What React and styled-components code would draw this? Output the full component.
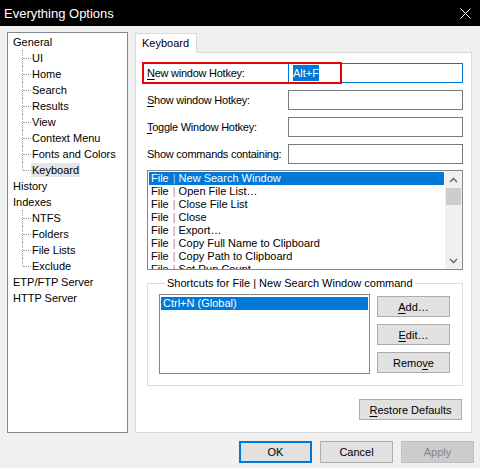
import React from 'react'
import styled, { createGlobalStyle } from 'styled-components'

const GlobalStyle = createGlobalStyle`
  html, body { margin: 0; padding: 0; }
  body {
    background: #f0f0f0;
    font-family: "Liberation Sans", Arial, sans-serif;
    font-size: 11px;
    color: #000;
  }
  * { box-sizing: border-box; }
`

const Window = styled.div`
  width: 480px;
  height: 468px;
  display: flex;
  flex-direction: column;
  background: #f0f0f0;
  overflow: hidden;
`

const TitleBar = styled.div`
  height: 26px;
  flex: none;
  background: #000;
  color: #fff;
  display: flex;
  align-items: center;
  justify-content: space-between;
  padding-left: 4px;
  font-size: 13px;
`

const CloseBox = styled.div`
  width: 30px;
  height: 26px;
  display: flex;
  align-items: center;
  justify-content: center;
`

const Body = styled.div`
  flex: 1;
  display: flex;
  flex-direction: column;
  gap: 8px;
  padding: 6px 6px 5px 7px;
`

const Main = styled.div`
  height: 401px;
  display: flex;
  gap: 7px;
`

const Tree = styled.div`
  width: 121px;
  border: 1px solid #828790;
  background: #fff;
  padding: 1px 0 0 5px;
`

const TreeRow = styled.div`
  position: relative;
  height: 16px;
  line-height: 16px;
  padding-left: ${p => (p.$child ? 19 : 0)}px;
  white-space: nowrap;

  ${p => p.$child && `
    &::before {
      content: "";
      position: absolute;
      left: 9px;
      top: 0;
      height: ${p.$last ? 8 : 16}px;
      border-left: 1px dotted #a0a0a0;
    }
    &::after {
      content: "";
      position: absolute;
      left: 10px;
      top: 8px;
      width: 8px;
      border-top: 1px dotted #a0a0a0;
    }
  `}
`

const TreeLabel = styled.span`
  display: inline-block;
  line-height: 14px;
  padding: 0 1px;
  margin-left: -1px;
  background: ${p => (p.$selected ? '#e5e5e5' : 'transparent')};
`

const Side = styled.div`
  width: 337px;
  display: flex;
  flex-direction: column;
`

const TabStrip = styled.div`
  display: flex;
  padding-top: 1px;
`

const Tab = styled.div`
  position: relative;
  z-index: 1;
  height: 20px;
  margin-bottom: -1px;
  padding: 2px 7px 0 6px;
  line-height: 15px;
  background: #fff;
  border: 1px solid #d9d9d9;
  border-bottom: none;
`

const Panel = styled.div`
  flex: 1;
  display: flex;
  flex-direction: column;
  background: #fff;
  border: 1px solid #d9d9d9;
  padding: 10px 8px 0 11px;
`

const FieldRow = styled.div`
  position: relative;
  display: grid;
  grid-template-columns: 141px 175px;
  align-items: center;
  height: 20px;
  margin-bottom: 7px;
`

const FieldLabel = styled.span`
  letter-spacing: -0.25px;
  white-space: nowrap;
`

const Marker = styled.div`
  position: absolute;
  left: -5px;
  top: -1px;
  width: 200px;
  height: 22px;
  border: 2px solid #e8000b;
  pointer-events: none;
`

const TextBox = styled.div`
  height: 20px;
  border: 1px solid ${p => (p.$focused ? '#0078d7' : '#7a7a7a')};
  background: #fff;
  padding: 1px 3px 1px 4px;
  display: flex;
  align-items: center;
`

const Selected = styled.span`
  background: #0078d7;
  color: #fff;
  line-height: 16px;
`

const Key = styled.u`
  text-decoration: underline;
  text-underline-offset: 2px;
`

const ListBox = styled.div`
  margin-top: -1px;
  height: 100px;
  border: 1px solid #828790;
  background: #fff;
  display: flex;
  overflow: hidden;
`

const ListRows = styled.div`
  flex: 1;
  padding: 1px;
  overflow: hidden;
`

const ListRow = styled.div`
  height: 13px;
  line-height: 13px;
  padding-left: 2px;
  white-space: nowrap;
  background: ${p => (p.$selected ? '#0078d7' : 'transparent')};
  color: ${p => (p.$selected ? '#fff' : '#000')};
`

const Pipe = styled.span`
  color: ${p => (p.$selected ? '#a9d2f3' : '#d0893e')};
  margin: 0 3px 0 4px;
`

const ScrollBar = styled.div`
  width: 17px;
  background: #f0f0f0;
  display: flex;
  flex-direction: column;
`

const ScrollArrow = styled.div`
  height: 17px;
  display: flex;
  align-items: center;
  justify-content: center;
`

const ScrollTrack = styled.div`
  flex: 1;
  padding: 0 1px;
`

const Thumb = styled.div`
  height: 17px;
  background: #cdcdcd;
`

const Group = styled.fieldset`
  margin: 6px 0 0;
  min-width: 0;
  border: 1px solid #dcdcdc;
  padding: 4px 12px 11px 11px;
  display: flex;
  gap: 7px;
`

const Legend = styled.legend`
  margin-left: 6px;
  padding: 0 2px;
  line-height: 14px;
`

const ShortcutList = styled.div`
  width: 211px;
  height: 80px;
  border: 1px solid #828790;
  background: #fff;
  padding: 2px 1px 1px;
`

const SideButtons = styled.div`
  display: flex;
  flex-direction: column;
  gap: 7px;
  padding-top: 2px;
`

const Button = styled.button`
  width: ${p => p.$width || 73}px;
  height: ${p => p.$height || 21}px;
  padding: 0;
  font: inherit;
  color: ${p => (p.$disabled ? '#838383' : '#000')};
  background: ${p => (p.$disabled ? '#cccccc' : '#e1e1e1')};
  border: ${p => (p.$default ? '2px solid #0078d7' : `1px solid ${p.$disabled ? '#bfbfbf' : '#adadad'}`)};
  border-radius: 0;
`

const RestoreRow = styled.div`
  display: flex;
  justify-content: flex-end;
  padding-right: 1px;
  margin-top: 13px;
`

const Footer = styled.div`
  display: flex;
  justify-content: flex-end;
  gap: 8px;
`

const tree = [
  { label: 'General' },
  { label: 'UI', child: true },
  { label: 'Home', child: true },
  { label: 'Search', child: true },
  { label: 'Results', child: true },
  { label: 'View', child: true },
  { label: 'Context Menu', child: true },
  { label: 'Fonts and Colors', child: true },
  { label: 'Keyboard', child: true, last: true, selected: true },
  { label: 'History' },
  { label: 'Indexes' },
  { label: 'NTFS', child: true },
  { label: 'Folders', child: true },
  { label: 'File Lists', child: true },
  { label: 'Exclude', child: true, last: true },
  { label: 'ETP/FTP Server' },
  { label: 'HTTP Server' },
]

const commands = [
  'New Search Window',
  'Open File List…',
  'Close File List',
  'Close',
  'Export…',
  'Copy Full Name to Clipboard',
  'Copy Path to Clipboard',
  'Set Run Count…',
]

const Chevron = ({ up }) => (
  <svg width="9" height="6" viewBox="0 0 9 6">
    <path d={up ? 'M1 5 L4.5 1.5 L8 5' : 'M1 1 L4.5 4.5 L8 1'} fill="none" stroke="#606060" strokeWidth="1.3" />
  </svg>
)

export default function App() {
  return (
    <Window>
      <GlobalStyle />
      <TitleBar>
        Everything Options
        <CloseBox>
          <svg width="11" height="11" viewBox="0 0 11 11">
            <path d="M0.5 0.5 L10.5 10.5 M10.5 0.5 L0.5 10.5" stroke="#fff" strokeWidth="1" />
          </svg>
        </CloseBox>
      </TitleBar>
      <Body>
        <Main>
          <Tree>
            {tree.map(item => (
              <TreeRow key={item.label} $child={item.child} $last={item.last}>
                <TreeLabel $selected={item.selected}>{item.label}</TreeLabel>
              </TreeRow>
            ))}
          </Tree>
          <Side>
            <TabStrip>
              <Tab>Keyboard</Tab>
            </TabStrip>
            <Panel>
              <FieldRow>
                <FieldLabel><Key>N</Key>ew window Hotkey:</FieldLabel>
                <TextBox $focused><Selected>Alt+F</Selected></TextBox>
                <Marker />
              </FieldRow>
              <FieldRow>
                <FieldLabel><Key>S</Key>how window Hotkey:</FieldLabel>
                <TextBox />
              </FieldRow>
              <FieldRow>
                <FieldLabel><Key>T</Key>oggle Window Hotkey:</FieldLabel>
                <TextBox />
              </FieldRow>
              <FieldRow>
                <FieldLabel>Show commands containing:</FieldLabel>
                <TextBox />
              </FieldRow>
              <ListBox>
                <ListRows>
                  {commands.map((cmd, i) => (
                    <ListRow key={cmd} $selected={i === 0}>
                      File<Pipe $selected={i === 0}>|</Pipe>{cmd}
                    </ListRow>
                  ))}
                </ListRows>
                <ScrollBar>
                  <ScrollArrow><Chevron up /></ScrollArrow>
                  <ScrollTrack><Thumb /></ScrollTrack>
                  <ScrollArrow><Chevron /></ScrollArrow>
                </ScrollBar>
              </ListBox>
              <Group>
                <Legend>Shortcuts for File | New Search Window command</Legend>
                <ShortcutList>
                  <ListRow $selected>Ctrl+N (Global)</ListRow>
                </ShortcutList>
                <SideButtons>
                  <Button><Key>A</Key>dd…</Button>
                  <Button><Key>E</Key>dit…</Button>
                  <Button>Remo<Key>v</Key>e</Button>
                </SideButtons>
              </Group>
              <RestoreRow>
                <Button $width={103}><Key>R</Key>estore Defaults</Button>
              </RestoreRow>
            </Panel>
          </Side>
        </Main>
        <Footer>
          <Button $default $height={22}>OK</Button>
          <Button $height={22}>Cancel</Button>
          <Button $disabled $height={22}>Apply</Button>
        </Footer>
      </Body>
    </Window>
  )
}
